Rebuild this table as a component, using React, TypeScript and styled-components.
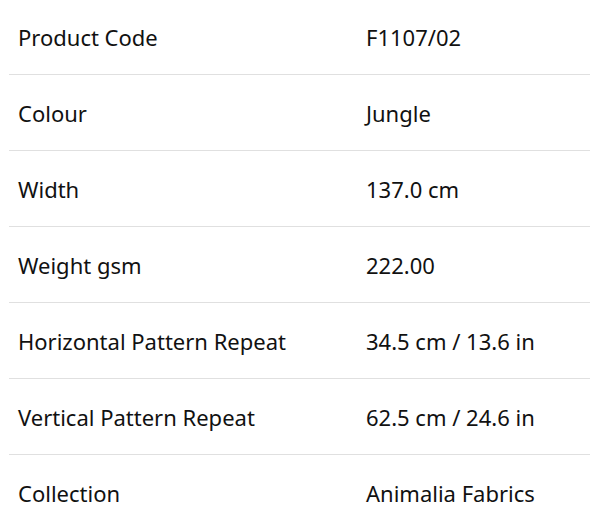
import React from "react";
import styled, { createGlobalStyle } from "styled-components";

const GlobalStyle = createGlobalStyle`
  body {
    margin: 0;
    background: #ffffff;
    font-family: "Noto Sans", "Open Sans", sans-serif;
    color: #111111;
  }
`;

const Table = styled.div`
  width: 581px;
  margin: -1px 0 0 9px;
  display: flex;
  flex-direction: column;
`;

const Row = styled.div`
  display: grid;
  grid-template-columns: 348px 1fr;
  align-items: center;
  height: 75px;
  border-bottom: 1px solid #e0e0e0;
  &:last-child {
    border-bottom: none;
  }
`;

const Cell = styled.div`
  padding-left: 9px;
  font-size: 22px;
  line-height: 30px;
  white-space: nowrap;
`;

const specs: [string, string][] = [
  ["Product Code", "F1107/02"],
  ["Colour", "Jungle"],
  ["Width", "137.0 cm"],
  ["Weight gsm", "222.00"],
  ["Horizontal Pattern Repeat", "34.5 cm / 13.6 in"],
  ["Vertical Pattern Repeat", "62.5 cm / 24.6 in"],
  ["Collection", "Animalia Fabrics"],
];

export default function App() {
  return (
    <>
      <GlobalStyle />
      <Table>
        {specs.map(([label, value]) => (
          <Row key={label}>
            <Cell>{label}</Cell>
            <Cell>{value}</Cell>
          </Row>
        ))}
      </Table>
    </>
  );
}
